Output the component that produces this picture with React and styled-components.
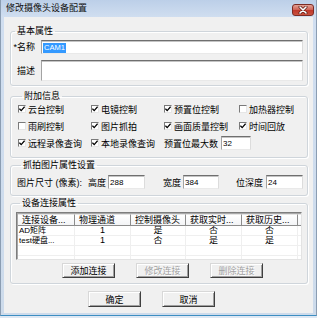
import React from "react";
import styled, { createGlobalStyle } from "styled-components";

const GlobalStyle = createGlobalStyle`
  html, body {
    margin: 0;
    padding: 0;
    background: #dfe8f3;
  }
  body {
    font-family: "Liberation Sans", "Noto Sans CJK SC", sans-serif;
    font-size: 9px;
    color: #000;
  }
`;

const Window = styled.div`
  width: 317px;
  height: 316px;
  box-sizing: border-box;
  display: flex;
  flex-direction: column;
  padding: 0 3px 2px 3px;
  background: linear-gradient(#bccfe8, #d0def0 17px, #cddbeb);
  border-left: 1px solid #8b9db2;
  border-right: 1px solid #8b9db2;
  border-bottom: 1px solid #3d8ec2;
`;

const TitleBar = styled.div`
  height: 17px;
  flex: none;
  display: flex;
  align-items: flex-start;
  padding-left: 2px;
  margin-right: -1px;
`;

const Title = styled.span`
  line-height: 17px;
  font-size: 9px;
  color: #111;
`;

const CloseButton = styled.span`
  margin-left: auto;
  margin-top: 4px;
  width: 22px;
  height: 12px;
  box-sizing: border-box;
  border: 1px solid #7b2b24;
  border-radius: 3px;
  background: linear-gradient(#e3a195, #d0675a 45%, #c0392c 55%, #c9523f);
  display: flex;
  align-items: center;
  justify-content: center;
`;

const Client = styled.div`
  flex: 1;
  background: #f0f0f0;
  display: flex;
  flex-direction: column;
  padding: 9px 5px 0 6px;
`;

const Group = styled.fieldset`
  margin: ${(p) => p.$mt || 0}px 0 0 0;
  padding: ${(p) => p.$pad};
  border: 1px solid #cfd5db;
  border-radius: 3px;
  box-shadow: inset 1px 1px 0 #fff, 1px 1px 0 #fff;
  min-width: 0;
`;

const Legend = styled.legend`
  margin-left: 4px;
  padding: 0 2px;
  height: 10px;
  line-height: 10px;
  font-size: 9px;
`;

const FormRow = styled.div`
  display: flex;
  align-items: ${(p) => (p.$top ? "flex-start" : "center")};
  height: ${(p) => p.$h}px;
  margin-top: ${(p) => p.$mt || 0}px;
`;

const FieldLabel = styled.span`
  width: 24px;
  margin-right: 6px;
  text-align: right;
  white-space: nowrap;
  line-height: ${(p) => p.$lh || 14}px;
  align-self: center;
`;

const TextBox = styled.div`
  box-sizing: border-box;
  width: ${(p) => (p.$w ? `${p.$w}px` : "auto")};
  flex: ${(p) => (p.$w ? "none" : 1)};
  height: ${(p) => p.$h || 14}px;
  background: #fff;
  border: 1px solid;
  border-color: #6f6f6f #dcdcdc #e9e9e9 #a3a3a3;
  box-shadow: inset 0 1px 0 #c4c4c4;
  padding: 1px 0 0 1px;
  font-size: 8px;
  line-height: 11px;
  white-space: nowrap;
  overflow: hidden;
`;

const Selected = styled.span`
  background: #3399ff;
  color: #fff;
  font-size: 7.5px;
  padding: 0 1px;
  line-height: 10px;
  display: inline-block;
`;

const CheckGrid = styled.div`
  display: grid;
  grid-template-columns: 73px 73px 75px 1fr;
  grid-auto-rows: 16px;
  row-gap: 1px;
`;

const CheckItem = styled.label`
  display: flex;
  align-items: center;
  gap: 2px;
  white-space: nowrap;
  grid-column: ${(p) => p.$span || "auto"};
`;

const Box = styled.span`
  width: 8px;
  height: 8px;
  box-sizing: border-box;
  background: #fff;
  border: 1px solid;
  border-color: #7a7a7a #e6e6e6 #e6e6e6 #7a7a7a;
  display: inline-flex;
  align-items: center;
  justify-content: center;
  flex: none;
`;

const InlineLabel = styled.span`
  white-space: nowrap;
  margin-right: ${(p) => p.$mr || 0}px;
  width: ${(p) => (p.$w ? `${p.$w}px` : "auto")};
  flex: none;
`;

const SizeRow = styled.div`
  display: flex;
  align-items: center;
  height: 14px;
`;

const Spacer = styled.span`
  width: ${(p) => p.$w}px;
  flex: none;
`;

const ListView = styled.div`
  height: 48px;
  box-sizing: border-box;
  background: #fff;
  border: 1px solid;
  border-color: #7d7d7d #e3e3e3 #e3e3e3 #7d7d7d;
  box-shadow: inset 1px 1px 0 #a8a8a8;
  padding: 1px 0 0 1px;
  overflow: hidden;
`;

const ListRow = styled.div`
  display: flex;
  height: ${(p) => (p.$head ? 12 : 10)}px;
`;

const HeadCell = styled.div`
  width: ${(p) => p.$w}px;
  flex: none;
  box-sizing: border-box;
  background: linear-gradient(#ffffff, #f3f4f6);
  border-right: 1px solid #8c8c8c;
  border-bottom: 1px solid #8c8c8c;
  border-top: 1px solid #e6e6e6;
  padding-left: 4px;
  line-height: 10px;
  white-space: nowrap;
  overflow: hidden;
`;

const Cell = styled.div`
  width: ${(p) => p.$w}px;
  flex: none;
  box-sizing: border-box;
  border-right: 1px solid #efefef;
  border-bottom: 1px solid #efefef;
  text-align: ${(p) => (p.$left ? "left" : "center")};
  padding-left: ${(p) => (p.$left ? 1 : 0)}px;
  line-height: 9px;
  font-size: ${(p) => (p.$left ? 8 : 9)}px;
  white-space: nowrap;
  overflow: hidden;
`;

const ButtonRow = styled.div`
  display: flex;
  gap: 21px;
  padding-left: ${(p) => p.$pl}px;
  margin-top: ${(p) => p.$mt}px;
`;

const Button = styled.div`
  width: 53px;
  height: ${(p) => p.$h || 15}px;
  box-sizing: border-box;
  background: #f0f0f0;
  border: 1px solid;
  border-color: #d8d8d8 #3f3f3f #3f3f3f #d8d8d8;
  box-shadow: inset 1px 1px 0 #fff, inset -1px -1px 0 #a0a0a0;
  display: flex;
  align-items: center;
  justify-content: center;
  color: ${(p) => (p.$disabled ? "#a3a3a3" : "#000")};
  text-shadow: ${(p) => (p.$disabled ? "1px 1px 0 #fff" : "none")};
`;

const Check = ({ on }) => (
  <Box>
    {on && (
      <svg width="6" height="6" viewBox="0 0 6 6">
        <polyline
          points="0.4,2.6 2.2,4.6 5.6,0.6"
          fill="none"
          stroke="#000"
          strokeWidth="1.3"
        />
      </svg>
    )}
  </Box>
);

const cols = [57, 56, 55, 56, 56, 4];
const headers = ["连接设备...", "物理通道", "控制摄像头", "获取实时...", "获取历史...", ""];
const rows = [
  ["AD矩阵", "1", "是", "否", "否", ""],
  ["test硬盘...", "1", "否", "是", "是", ""],
  ["", "", "", "", "", ""],
  ["", "", "", "", "", ""],
];

const checks = [
  ["云台控制", true],
  ["电镜控制", true],
  ["预置位控制", true],
  ["加热器控制", false],
  ["雨刷控制", false],
  ["图片抓拍", true],
  ["画面质量控制", true],
  ["时间回放", true],
  ["远程录像查询", true],
  ["本地录像查询", true],
];

const App = () => {
  return (
    <>
      <GlobalStyle />
      <Window>
        <TitleBar>
          <Title>修改摄像头设备配置</Title>
          <CloseButton>
            <svg width="10" height="8" viewBox="0 0 10 8">
              <path d="M2 1 L8 7 M8 1 L2 7" stroke="#5a1a14" strokeWidth="3" strokeLinecap="round" />
              <path d="M2 1 L8 7 M8 1 L2 7" stroke="#fff" strokeWidth="1.6" strokeLinecap="round" />
            </svg>
          </CloseButton>
        </TitleBar>
        <Client>
          <Group $pad="4px 4px 4px 0">
            <Legend>基本属性</Legend>
            <FormRow $h={14}>
              <FieldLabel>*名称</FieldLabel>
              <TextBox>
                <Selected>CAM1</Selected>
              </TextBox>
            </FormRow>
            <FormRow $h={21} $mt={6}>
              <FieldLabel>描述</FieldLabel>
              <TextBox $h={21} />
            </FormRow>
          </Group>

          <Group $mt={5} $pad="0 4px 6px 7px">
            <Legend>附加信息</Legend>
            <CheckGrid>
              {checks.map(([label, on]) => (
                <CheckItem key={label}>
                  <Check on={on} />
                  {label}
                </CheckItem>
              ))}
              <CheckItem $span="3 / 5">
                <InlineLabel $mr={1}>预置位最大数</InlineLabel>
                <TextBox $w={30}>32</TextBox>
              </CheckItem>
            </CheckGrid>
          </Group>

          <Group $mt={2} $pad="5px 4px 6px 6px">
            <Legend>抓拍图片属性设置</Legend>
            <SizeRow>
              <InlineLabel $w={71}>图片尺寸 (像素):</InlineLabel>
              <InlineLabel $mr={2}>高度</InlineLabel>
              <TextBox $w={37}>288</TextBox>
              <Spacer $w={18} />
              <InlineLabel $mr={2}>宽度</InlineLabel>
              <TextBox $w={36}>384</TextBox>
              <Spacer $w={17} />
              <InlineLabel $mr={3}>位深度</InlineLabel>
              <TextBox $w={37}>24</TextBox>
            </SizeRow>
          </Group>

          <Group $mt={2} $pad="4px 5px 5px 5px">
            <Legend>设备连接属性</Legend>
            <ListView>
              <ListRow $head>
                {headers.map((h, i) => (
                  <HeadCell key={i} $w={cols[i]}>
                    {h}
                  </HeadCell>
                ))}
              </ListRow>
              {rows.map((r, ri) => (
                <ListRow key={ri}>
                  {r.map((c, i) => (
                    <Cell key={i} $w={cols[i]} $left={i === 0}>
                      {c}
                    </Cell>
                  ))}
                </ListRow>
              ))}
            </ListView>
            <ButtonRow $pl={46} $mt={3}>
              <Button>添加连接</Button>
              <Button $disabled>修改连接</Button>
              <Button $disabled>删除连接</Button>
            </ButtonRow>
          </Group>

          <ButtonRow $pl={78} $mt={7}>
            <Button $h={16}>确定</Button>
            <Button $h={16}>取消</Button>
          </ButtonRow>
        </Client>
      </Window>
    </>
  );
};

export default App;
